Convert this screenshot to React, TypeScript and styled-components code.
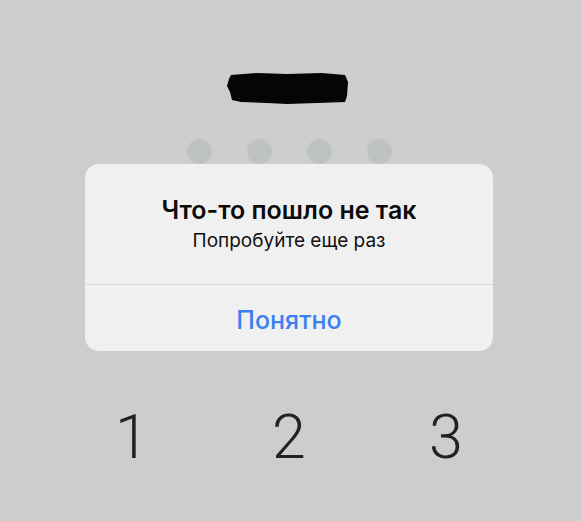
import React from "react";
import styled, { createGlobalStyle } from "styled-components";

const Global = createGlobalStyle`
  html, body { margin: 0; padding: 0; }
  body { background: #cdcdcd; font-family: Inter, Roboto, "Noto Sans", sans-serif; }
`;

const Screen = styled.div`
  position: relative;
  width: 581px;
  height: 521px;
  overflow: hidden;
  background: #cdcdcd;
  display: flex;
  flex-direction: column;
  align-items: center;
`;

const Redaction = styled.svg`
  display: block;
  margin-top: 72px;
  margin-left: -5px;
`;

const Dots = styled.div`
  display: flex;
  gap: 35px;
  margin-top: 34px;
  margin-left: -3px;
`;

const Dot = styled.span`
  width: 25px;
  height: 25px;
  border-radius: 50%;
  background: #bec2c2;
`;

const Keypad = styled.div`
  display: grid;
  grid-template-columns: repeat(3, 157px);
  margin-top: 242px;
  margin-left: -3px;
`;

const Key = styled.div`
  font-family: Roboto, Inter, sans-serif;
  font-weight: 300;
  font-size: 61px;
  line-height: 62px;
  color: #222;
  text-align: center;
`;

const Alert = styled.div`
  position: absolute;
  left: 85px;
  top: 164px;
  width: 408px;
  height: 187px;
  border-radius: 14px;
  background: #f0f0f0;
  display: flex;
  flex-direction: column;
  overflow: hidden;
`;

const Body = styled.div`
  height: 121px;
  display: flex;
  flex-direction: column;
  align-items: center;
  padding-top: 30px;
  box-sizing: border-box;
  border-bottom: 1px solid #d6d6d6;
`;

const Title = styled.div`
  font-weight: 600;
  font-size: 25px;
  line-height: 32px;
  color: #0b0b0b;
`;

const Message = styled.div`
  margin-top: 3px;
  font-weight: 400;
  font-size: 19px;
  line-height: 24px;
  color: #111;
`;

const Action = styled.div`
  flex: 1;
  display: flex;
  align-items: center;
  justify-content: center;
  font-weight: 500;
  font-size: 25px;
  color: #3a7ff3;
  padding-top: 3px;
`;

export default function App() {
  return (
    <>
      <Global />
      <Screen>
        <Redaction width="122" height="33" viewBox="0 0 122 33">
          <path
            d="M4 3 L30 1 L60 2 L95 1 L118 3 L121 10 L120 24 L118 30 L90 31 L60 32 L40 31 L14 30 L5 28 L3 20 L0 14 L2 7 Z"
            fill="#050505"
          />
        </Redaction>
        <Dots>
          <Dot />
          <Dot />
          <Dot />
          <Dot />
        </Dots>
        <Keypad>
          <Key>1</Key>
          <Key>2</Key>
          <Key>3</Key>
        </Keypad>
        <Alert>
          <Body>
            <Title>Что-то пошло не так</Title>
            <Message>Попробуйте еще раз</Message>
          </Body>
          <Action>Понятно</Action>
        </Alert>
      </Screen>
    </>
  );
}
